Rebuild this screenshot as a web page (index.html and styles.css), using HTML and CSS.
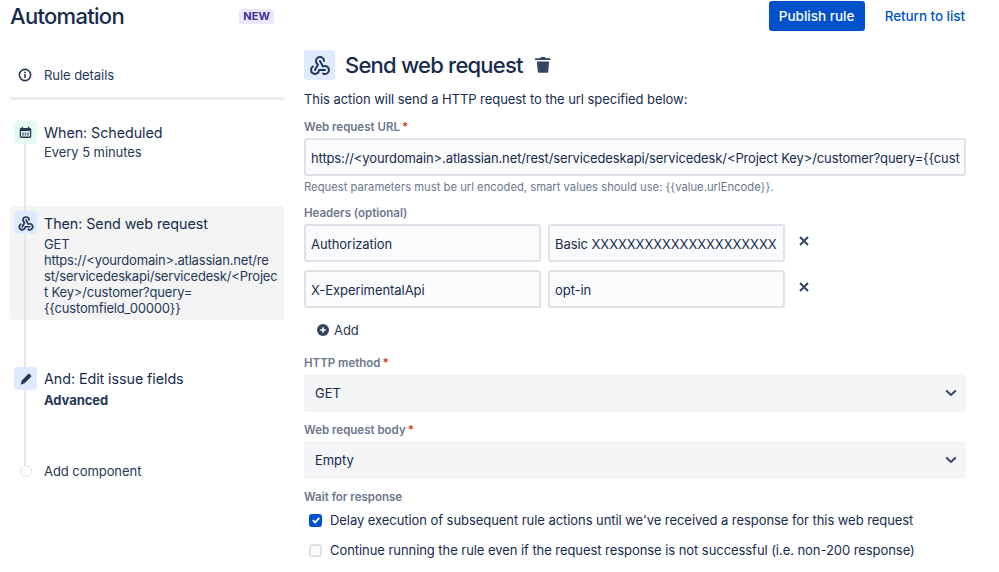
FILE: index.html
```html
<!DOCTYPE html>
<html lang="en">
<head>
<meta charset="utf-8">
<title>Automation</title>
<link rel="stylesheet" href="styles.css">
</head>
<body>
<div class="page">
  <aside class="side">
    <div class="side-head">
      <h1 class="title">Automation</h1>
      <span class="badge">NEW</span>
    </div>
    <div class="details">
      <svg class="info" viewBox="0 0 14 14" width="14" height="14"><circle cx="7" cy="7" r="5.6" fill="none" stroke="#253858" stroke-width="1.6"/><rect x="6.2" y="6.1" width="1.6" height="3.8" rx=".5" fill="#253858"/><circle cx="7" cy="4.4" r=".95" fill="#253858"/></svg>
      <span>Rule details</span>
    </div>
    <div class="timeline">
      <div class="rail"></div>
      <div class="step step-when">
        <span class="step-icon green"><svg viewBox="0 0 14 14" width="13" height="13"><path fill="#253858" fill-rule="evenodd" d="M3 .8h1.4v1.4h5.2V.8H11v1.4h.6c.9 0 1.6.7 1.6 1.6v7.6c0 .9-.7 1.6-1.6 1.6H2.4c-.9 0-1.6-.7-1.6-1.6V3.8c0-.9.7-1.6 1.6-1.6H3zM2.2 5.4v6h9.6v-6zM3.4 7h1.6v1.3H3.4zm2.8 0h1.6v1.3H6.2zM9 7h1.6v1.3H9zM3.4 9h1.6v1.3H3.4zm2.8 0h1.6v1.3H6.2zM9 9h1.6v1.3H9z"/></svg></span>
        <div class="step-text">
          <div class="step-title">When: Scheduled</div>
          <div class="step-sub tight">Every 5 minutes</div>
        </div>
      </div>
      <div class="step step-then">
        <span class="step-icon blue">
          <svg viewBox="0 0 24 24" width="18" height="18"><g fill="none" stroke="#253858" stroke-width="2.3" stroke-linecap="round" stroke-linejoin="round"><path d="M4.876 13.61a4 4 0 1 0 6.124 3.39h6"/><path d="M15.066 20.502a4 4 0 1 0 1.934-7.502c-.706 0-1.424.179-2 .5l-3-5.500"/><path d="M16 8a4 4 0 1 0-8 0c0 1.506.77 2.818 2 3.500l-3 5.500"/></g></svg>
        </span>
        <div class="step-text">
          <div class="step-title">Then: Send web request</div>
          <div class="step-url">GET<br>https://&lt;yourdomain&gt;.atlassian.net/re<br>st/servicedeskapi/servicedesk/&lt;Projec<br>t Key&gt;/customer?query=<br>{{customfield_00000}}</div>
        </div>
      </div>
      <div class="step step-and">
        <span class="step-icon blue"><svg viewBox="0 0 14 14" width="14" height="14"><path fill="#253858" d="M9.2 1.9a1 1 0 0 1 1.4 0l1.5 1.5a1 1 0 0 1 0 1.4L5.6 11.300 2.300 12.500a.4.400 0 0 1-.5-.5l1-3.500z"/></svg></span>
        <div class="step-text">
          <div class="step-title">And: Edit issue fields</div>
          <div class="step-sub strong">Advanced</div>
        </div>
      </div>
      <div class="step step-add">
        <span class="step-dot-wrap"><span class="step-dot"></span></span>
        <div class="step-add-text">Add component</div>
      </div>
    </div>
  </aside>

  <main class="main">
    <div class="top-actions">
      <button class="publish">Publish rule</button>
      <a class="back">Return to list</a>
    </div>
    <div class="heading">
      <span class="heading-icon"><svg viewBox="0 0 24 24" width="24" height="24"><g fill="none" stroke="#253858" stroke-width="2" stroke-linecap="round" stroke-linejoin="round"><path d="M4.876 13.61a4 4 0 1 0 6.124 3.39h6"/><path d="M15.066 20.502a4 4 0 1 0 1.934-7.502c-.706 0-1.424.179-2 .5l-3-5.500"/><path d="M16 8a4 4 0 1 0-8 0c0 1.506.77 2.818 2 3.500l-3 5.500"/></g></svg></span>
      <h2 class="heading-text">Send web request</h2>
      <svg class="trash" viewBox="0 0 16 16" width="16" height="16"><path fill="#344563" d="M5.800 0h4.400l.5 1.300h4.100c.4 0 .7.300.7.700v1H0V2c0-.4.300-.7.700-.7h4.600zM1.800 4.500h12.400l-1 10c-.1.800-.7 1.300-1.500 1.300h-7.400c-.8 0-1.400-.5-1.500-1.300z"/></svg>
    </div>
    <p class="desc">This action will send a HTTP request to the url specified below:</p>

    <div class="label label-url">Web request URL<i>*</i></div>
    <div class="field url">https://&lt;yourdomain&gt;.atlassian.net/rest/servicedeskapi/servicedesk/&lt;Project Key&gt;/customer?query={{cust</div>
    <div class="hint">Request parameters must be url encoded, smart values should use: {{value.urlEncode}}.</div>

    <div class="label label-headers">Headers (optional)</div>
    <div class="header-row">
      <div class="field">Authorization</div>
      <div class="field">Basic XXXXXXXXXXXXXXXXXXXXX</div>
      <svg class="remove" viewBox="0 0 10 10" width="10" height="10"><path d="M1 1l8 8M9 1l-8 8" stroke="#344563" stroke-width="2"/></svg>
    </div>
    <div class="header-row">
      <div class="field">X-ExperimentalApi</div>
      <div class="field">opt-in</div>
      <svg class="remove" viewBox="0 0 10 10" width="10" height="10"><path d="M1 1l8 8M9 1l-8 8" stroke="#344563" stroke-width="2"/></svg>
    </div>
    <div class="add">
      <svg viewBox="0 0 12 12" width="12" height="12"><circle cx="6" cy="6" r="6" fill="#344563"/><path d="M6 3.200v5.600M3.200 6h5.600" stroke="#fff" stroke-width="1.500"/></svg>
      <span>Add</span>
    </div>

    <div class="label label-method">HTTP method<i>*</i></div>
    <div class="select select-method"><span>GET</span><svg viewBox="0 0 12 8" width="12" height="8"><path d="M1.200 1.500 6 6l4.800-4.500" fill="none" stroke="#344563" stroke-width="2"/></svg></div>
    <div class="label label-body">Web request body<i>*</i></div>
    <div class="select select-body"><span>Empty</span><svg viewBox="0 0 12 8" width="12" height="8"><path d="M1.200 1.500 6 6l4.800-4.500" fill="none" stroke="#344563" stroke-width="2"/></svg></div>

    <div class="label label-wait">Wait for response</div>
    <div class="check">
      <span class="box on"><svg viewBox="0 0 12 12" width="12" height="12"><path d="M2.800 6.200l2.300 2.300 4.200-4.600" fill="none" stroke="#fff" stroke-width="1.800"/></svg></span>
      <span>Delay execution of subsequent rule actions until we've received a response for this web request</span>
    </div>
    <div class="check second">
      <span class="box"></span>
      <span>Continue running the rule even if the request response is not successful (i.e. non-200 response)</span>
    </div>
  </main>
</div>
</body>
</html>
```
FILE: styles.css
```css
* { box-sizing: border-box; }
html, body { margin: 0; height: 572px; overflow: hidden; background: #fff; }
body { font-family: Inter, "Liberation Sans", sans-serif; font-size: 13px; letter-spacing: -.06px; color: #172b4d; }
.page { display: grid; grid-template-columns: 274px 662px; column-gap: 20px; padding-left: 10px; }

.side-head { display: flex; align-items: center; justify-content: space-between; height: 32px; padding-right: 10px; }
.title { margin: 0; font-size: 22px; line-height: 32px; font-weight: 500; letter-spacing: -.7px; }
.badge { background: #eae6ff; color: #403294; font-size: 11px; font-weight: 700; line-height: 15px; padding: 0 4px; border-radius: 3px; letter-spacing: .1px; }

.details { display: flex; align-items: center; height: 68px; padding: 21px 0 0 8px; gap: 12px; border-bottom: 3px solid #ebecf0; color: #253858; }
.info { flex: none; }

.timeline { position: relative; padding-top: 19px; }
.rail { position: absolute; left: 14px; top: 24px; width: 2px; height: 341px; background: #e4e6ee; }
.step { display: flex; border-radius: 4px; }
.step-icon { position: relative; flex: none; width: 23px; height: 23px; margin: 0 7px 0 4px; border-radius: 4px; display: flex; align-items: center; justify-content: center; }
.step-text { position: relative; }
.green { background: #e3fcef; }
.blue { background: #deebff; }
.step-title { font-size: 14.300px; line-height: 24px; color: #172b4d; }
.step-sub { font-size: 13px; line-height: 18px; color: #253858; }
.tight { margin-top: -2px; }
.strong { font-weight: 700; }
.step-when { height: 86px; padding-top: 1px; margin-top: 1px; }
.step-then { background: #f4f4f5; height: 114px; padding-top: 5px; margin-bottom: 47px; }
.step-then .step-title { margin-top: -5px; padding-top: 5px; line-height: 25px; }
.step-url { line-height: 16px; letter-spacing: -.18px; color: #253858; white-space: nowrap; }
.step-and { height: 92px; }
.step-add { align-items: center; height: 24px; }
.step-dot-wrap { position: relative; flex: none; width: 34px; display: flex; padding-left: 10px; }
.step-dot { width: 12px; height: 12px; border: 1.500px solid #dfe1e6; border-radius: 50%; background: #fff; }
.step-add-text { color: #253858; }

.top-actions { display: flex; justify-content: flex-end; align-items: center; height: 30px; margin-top: 1px; gap: 20px; padding-right: 1px; }
.publish { width: 96px; height: 30px; border: 0; border-radius: 3px; background: #0052cc; color: #fff; font: 500 13.500px Inter, sans-serif; }
.back { color: #0052cc; font-size: 13.500px; font-weight: 500; }

.heading { display: flex; align-items: center; margin-top: 19px; height: 30px; }
.heading-icon { width: 31px; height: 30px; background: #deebff; border-radius: 3px; display: flex; align-items: center; justify-content: center; margin-right: 10px; }
.heading-text { margin: 0; font-size: 22px; line-height: 30px; font-weight: 500; letter-spacing: -.78px; }
.trash { margin-left: 12px; }
.desc { margin: 10px 0 0; line-height: 18px; color: #172b4d; }

.label { font-size: 11.500px; font-weight: 600; line-height: 14px; letter-spacing: 0; color: #6b778c; }
.label i { color: #de350b; font-style: normal; margin-left: 2px; }
.label-url { margin-top: 12px; }
.field { height: 38px; line-height: 36px; padding: 0 5px; background: #fafbfc; border: 2px solid #dfe1e6; border-radius: 3px; white-space: nowrap; color: #172b4d; }
.url { margin-top: 4px; letter-spacing: -.12px; }
.hint { font-size: 11.250px; line-height: 14px; margin-top: 4px; letter-spacing: 0; color: #6b778c; }
.label-headers { margin-top: 12px; }
.header-row { display: grid; grid-template-columns: 237px 237px 10px; column-gap: 7px; align-items: center; margin-top: 4px; }
.header-row + .header-row { margin-top: 8px; }
.remove { margin-left: 7px; margin-top: -4px; }
.add { display: flex; align-items: center; gap: 5px; margin: 13px 0 0 13px; line-height: 18px; color: #253858; }
.label-method { margin-top: 17px; }
.select { display: flex; align-items: center; justify-content: space-between; height: 38px; padding: 0 9px 0 11px; background: #f4f5f7; border-radius: 3px; }
.select-method { margin-top: 4px; }
.select-body { margin-top: 4px; }
.label-body { margin-top: 11px; }
.label-wait { margin-top: 11px; }
.check { display: flex; align-items: center; gap: 8px; margin: 7px 0 0 5px; line-height: 18px; }
.second { margin-top: 12px; }
.box { width: 13px; height: 13px; border: 2px solid #dfe1e6; border-radius: 3px; background: #fafbfc; display: flex; align-items: center; justify-content: center; flex: none; }
.box.on { background: #0052cc; border-color: #0052cc; }
.box svg { flex: none; }
```
